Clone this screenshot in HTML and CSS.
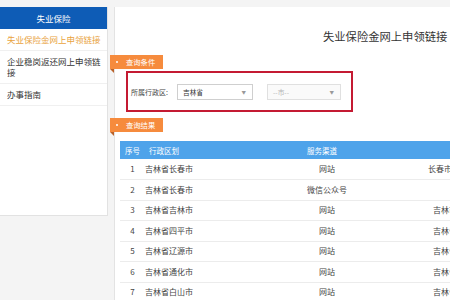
FILE: index.html
```html
<!DOCTYPE html>
<html lang="zh-CN">
<head>
    <meta charset="UTF-8">
    <title>失业保险金网上申领链接</title>
    <link rel="stylesheet" href="styles.css">
</head>
<body>
    <div class="page">
        <aside class="side">
            <div class="side-head">失业保险</div>
            <a class="side-item active" href="#">失业保险金网上申领链接</a>
            <a class="side-item" href="#">企业稳岗返还网上申领链接</a>
            <a class="side-item" href="#">办事指南</a>
        </aside>

        <main class="panel">
            <h1 class="title">失业保险金网上申领链接</h1>

            <div class="tab">查询条件</div>
            <div class="query">
                <label class="query-label">所属行政区:</label>
                <div class="select">吉林省<span class="arrow">▼</span></div>
                <div class="select disabled">--市--<span class="arrow">▼</span></div>
            </div>

            <div class="tab tab-result">查询结果</div>
            <table class="result">
                <thead>
                    <tr>
                        <th class="c-no">序号</th>
                        <th class="c-area">行政区划</th>
                        <th class="c-way">服务渠道</th>
                        <th class="c-name"></th>
                    </tr>
                </thead>
                <tbody>
                    <tr><td class="c-no">1</td><td class="c-area">吉林省长春市</td><td class="c-way">网站</td><td class="c-name first">长春市社会保险网上服务平台</td></tr>
                    <tr><td class="c-no">2</td><td class="c-area">吉林省长春市</td><td class="c-way">微信公众号</td><td class="c-name"></td></tr>
                    <tr><td class="c-no">3</td><td class="c-area">吉林省吉林市</td><td class="c-way">网站</td><td class="c-name">吉林市社会保险网上服务平台</td></tr>
                    <tr><td class="c-no">4</td><td class="c-area">吉林省四平市</td><td class="c-way">网站</td><td class="c-name">吉林省社会保险网上服务平台</td></tr>
                    <tr><td class="c-no">5</td><td class="c-area">吉林省辽源市</td><td class="c-way">网站</td><td class="c-name">吉林省社会保险网上服务平台</td></tr>
                    <tr><td class="c-no">6</td><td class="c-area">吉林省通化市</td><td class="c-way">网站</td><td class="c-name">吉林省社会保险网上服务平台</td></tr>
                    <tr><td class="c-no">7</td><td class="c-area">吉林省白山市</td><td class="c-way">网站</td><td class="c-name">吉林省社会保险网上服务平台</td></tr>
                </tbody>
            </table>
        </main>
    </div>
</body>
</html>
```

FILE: styles.css
```css
body {
    margin: 0;
    background-color: #f4f4f4;
    font-family: "Noto Sans CJK SC", "Liberation Sans", sans-serif;
    color: #333;
    overflow: hidden;
}

.page {
    display: flex;
    gap: 6px;
    padding-top: 7px;
    width: 560px;
}

/* left menu */
.side {
    flex: none;
    box-sizing: border-box;
    width: 108px;
    height: 209px;
    background-color: #fff;
    border-right: 1px solid #e2e2e2;
    border-bottom: 1px solid #e2e2e2;
}

.side-head {
    height: 22px;
    line-height: 22px;
    background-color: #0e5cb6;
    color: #fff;
    text-align: center;
    font-size: 8.5px;
}

.side-item {
    display: block;
    padding: 5px 4px 5px 7px;
    font-size: 8.5px;
    line-height: 11px;
    color: #333;
    text-decoration: none;
    border-bottom: 1px solid #f0f0f0;
}

.side-item.active {
    color: #e9a33e;
}

/* main panel */
.panel {
    flex: 1;
    min-height: 300px;
    background-color: #fff;
    border-left: 1px solid #e3e3e3;
    padding-left: 5px;
}

.title {
    margin: 21px 0 0;
    padding-left: 203px;
    font-size: 11.3px;
    line-height: 16px;
    font-weight: normal;
    color: #333;
    white-space: nowrap;
}

.tab {
    position: relative;
    width: 53px;
    height: 14px;
    line-height: 14px;
    margin: 11px 0 0 -10px;
    padding-left: 16px;
    box-sizing: border-box;
    background-color: #f68b3d;
    color: #fff;
    font-size: 7.3px;
}

.tab-result {
    margin-top: 6px;
}

.tab::before {
    content: "";
    position: absolute;
    left: 6px;
    top: 6px;
    width: 2px;
    height: 2px;
    border-radius: 50%;
    background-color: #fff;
}

.tab::after {
    content: "";
    position: absolute;
    left: 0;
    top: 100%;
    border-top: 4px solid #b9622a;
    border-left: 4px solid transparent;
}

.query {
    display: flex;
    align-items: center;
    box-sizing: border-box;
    width: 227px;
    height: 41px;
    margin: 2px 0 0 6px;
    padding-left: 3px;
    border: 2px solid #c41a32;
    font-size: 7px;
}

.query-label {
    width: 46px;
    color: #444;
}

.select {
    position: relative;
    box-sizing: border-box;
    width: 76px;
    height: 16px;
    line-height: 14px;
    padding-left: 5px;
    border: 1px solid #cfcfcf;
    background-color: #fff;
    color: #333;
    font-size: 6.7px;
}

.select + .select {
    width: 74px;
    margin-left: 14px;
}

.select.disabled {
    background-color: #fafafa;
    border-color: #e0e0e0;
    color: #b5b5b5;
}

.arrow {
    position: absolute;
    right: 6px;
    top: 0;
    font-size: 4.5px;
    color: #999;
}

/* result table */
.result {
    width: 480px;
    margin-top: 9px;
    border-collapse: collapse;
    table-layout: fixed;
    font-size: 8px;
    color: #444;
}

.result th,
.result td {
    box-sizing: border-box;
    padding: 0;
}

.result th {
    height: 18px;
    background-color: #4ea3ea;
    color: #fff;
    font-weight: normal;
    font-size: 7.5px;
    text-align: left;
}

.result td {
    height: 20.5px;
    line-height: 12px;
    border-bottom: 1px solid #ececec;
    white-space: nowrap;
    overflow: hidden;
}

.c-no {
    width: 25px;
}

.result th.c-no {
    padding-left: 5px;
}

.result td.c-no {
    text-align: center;
}

.c-area {
    width: 105px;
}

.result th.c-area {
    padding-left: 4px;
}

.result .c-way {
    width: 154px;
    text-align: center;
}

.result th.c-way {
    padding-right: 10px;
}

.result td.c-name {
    padding-left: 29px;
}

.result td.c-name.first {
    padding-left: 24px;
}
```
